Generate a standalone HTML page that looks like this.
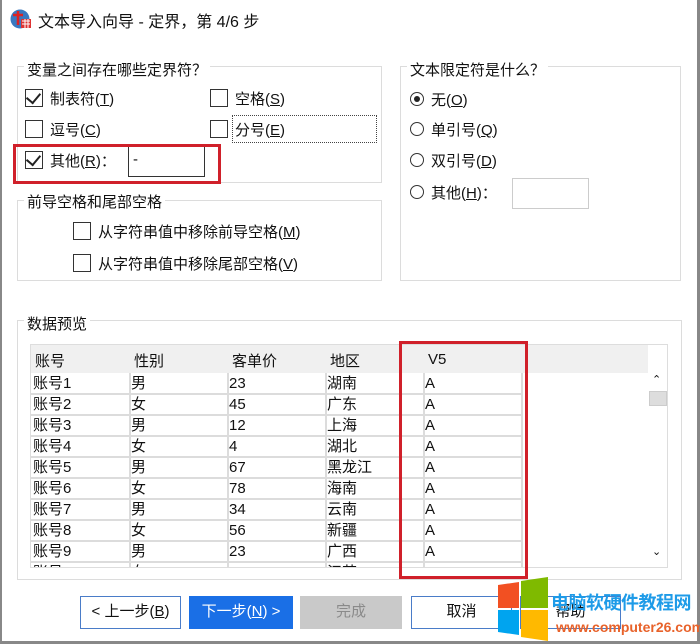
<!DOCTYPE html>
<html><head><meta charset="utf-8"><style>
*{box-sizing:border-box;margin:0;padding:0}
body{width:700px;height:644px;background:#fff;position:relative;overflow:hidden;font-family:"Liberation Sans","Microsoft YaHei","Noto Sans CJK SC",sans-serif;font-size:15px;color:#111}
.a{position:absolute;white-space:nowrap}
.g{position:absolute;border:1px solid #dcdcdc}
.lg{position:absolute;background:#fff;padding:0 3px;font-size:15px}
.cb{position:absolute;width:18px;height:18px;border:1.5px solid #333;background:#fff}
.cb.on::after{content:"";position:absolute;left:3px;top:0px;width:7px;height:11px;border:solid #222;border-width:0 2px 2px 0;transform:rotate(40deg)}
.rb{position:absolute;width:14px;height:14px;border:1.3px solid #333;border-radius:50%;background:#fff}
.rb.on::after{content:"";position:absolute;left:3px;top:3px;width:6px;height:6px;border-radius:50%;background:#222}
u{text-decoration:underline}
.btn{position:absolute;top:596px;height:33px;border:1.5px solid #4a7cc8;background:#fff;text-align:center;line-height:30px;font-size:15px}
.cell{position:absolute;height:21px;line-height:21px;font-size:15px}
.red{position:absolute;border:3px solid #d0202a}
</style></head><body>
<div class="a" style="left:0;top:0;width:2px;height:644px;background:#888"></div>
<div class="a" style="left:697px;top:0;width:3px;height:644px;background:#888"></div>
<div class="a" style="left:0;top:641px;width:700px;height:3px;background:#888"></div>
<!-- title -->
<svg class="a" style="left:10px;top:8px" width="22" height="22" viewBox="0 0 22 22"><circle cx="10" cy="11" r="9.5" fill="#3a78c0"/><rect x="11" y="11" width="10" height="9" fill="#d33"/><path d="M12 13h8M12 16h8M15 11v9M18 11v9" stroke="#fff" stroke-width="1"/><path d="M3 7h10M8 3v14" stroke="#d22" stroke-width="2.5"/></svg>
<div class="a" style="left:38px;top:8px;font-size:16px">文本导入向导 - 定界，第 4/6 步</div>

<!-- group 1 -->
<div class="g" style="left:17px;top:66px;width:365px;height:117px"></div>
<div class="lg" style="left:24px;top:59px">变量之间存在哪些定界符？</div>
<div class="cb on" style="left:25px;top:89px"></div><div class="a" style="left:50px;top:88px">制表符(<u>T</u>)</div>
<div class="cb" style="left:210px;top:89px"></div><div class="a" style="left:235px;top:88px">空格(<u>S</u>)</div>
<div class="cb" style="left:25px;top:120px"></div><div class="a" style="left:50px;top:119px">逗号(<u>C</u>)</div>
<div class="cb" style="left:210px;top:120px"></div><div class="a" style="left:235px;top:119px">分号(<u>E</u>)</div>
<div class="a" style="left:232px;top:115px;width:145px;height:28px;border:1px dotted #444"></div>
<div class="cb on" style="left:25px;top:151px"></div><div class="a" style="left:50px;top:150px">其他(<u>R</u>)：</div>
<div class="a" style="left:128px;top:146px;width:77px;height:31px;border:1.5px solid #333;padding-left:4px;line-height:26px">-</div>
<div class="red" style="left:13px;top:144px;width:208px;height:40px"></div>

<!-- group 2 -->
<div class="g" style="left:17px;top:200px;width:365px;height:81px"></div>
<div class="lg" style="left:24px;top:191px">前导空格和尾部空格</div>
<div class="cb" style="left:73px;top:222px"></div><div class="a" style="left:98px;top:221px">从字符串值中移除前导空格(<u>M</u>)</div>
<div class="cb" style="left:73px;top:254px"></div><div class="a" style="left:98px;top:253px">从字符串值中移除尾部空格(<u>V</u>)</div>

<!-- group 3 -->
<div class="g" style="left:400px;top:66px;width:281px;height:215px"></div>
<div class="lg" style="left:407px;top:59px">文本限定符是什么？</div>
<div class="rb on" style="left:410px;top:92px"></div><div class="a" style="left:431px;top:89px">无(<u>O</u>)</div>
<div class="rb" style="left:410px;top:122px"></div><div class="a" style="left:431px;top:119px">单引号(<u>Q</u>)</div>
<div class="rb" style="left:410px;top:153px"></div><div class="a" style="left:431px;top:150px">双引号(<u>D</u>)</div>
<div class="rb" style="left:410px;top:185px"></div><div class="a" style="left:431px;top:182px">其他(<u>H</u>)：</div>
<div class="a" style="left:512px;top:178px;width:77px;height:31px;border:1px solid #ccc"></div>

<!-- preview -->
<div class="g" style="left:17px;top:320px;width:665px;height:260px"></div>
<div class="lg" style="left:24px;top:313px">数据预览</div>
<div class="a" style="left:30px;top:344px;width:638px;height:224px;border:1px solid #ddd;background:#fff;overflow:hidden">
<div class="a" style="left:0;top:0;width:617px;height:28px;background:#f0f0f0"></div>
<div class="a" style="left:4px;top:5px">账号</div><div class="a" style="left:103px;top:5px">性别</div><div class="a" style="left:201px;top:5px">客单价</div><div class="a" style="left:299px;top:5px">地区</div><div class="a" style="left:397px;top:6px">V5</div>
<div id="rows"></div>
<div class="a" style="left:618px;top:28px;width:19px;height:196px;background:#fff"></div>
<div class="a" style="left:621px;top:28px;font-size:11px">&#8963;</div>
<div class="a" style="left:618px;top:46px;width:18px;height:15px;background:#ddd;border:1px solid #ccc"></div>
<div class="a" style="left:621px;top:200px;font-size:11px">&#8964;</div>
</div>
<div class="red" style="left:399px;top:341px;width:129px;height:238px"></div>

<!-- buttons -->
<div class="btn" style="left:80px;width:101px">&lt; 上一步(<u>B</u>)</div>
<div class="btn" style="left:189px;width:104px;background:#1a6fe6;border-color:#1a6fe6;color:#fff">下一步(<u>N</u>) &gt;</div>
<div class="btn" style="left:300px;width:102px;background:#c9c9c9;border-color:#c9c9c9;color:#8a8a8a">完成</div>
<div class="btn" style="left:411px;width:101px">取消</div>
<div class="btn" style="left:520px;width:101px">帮助</div>

<!-- watermark -->
<svg class="a" style="left:496px;top:575px" width="54" height="68" viewBox="0 0 54 68"><path d="M2 10 L23 7 L23 33 L2 33Z" fill="#f25022"/><path d="M25 6 L52 2 L52 33 L25 33Z" fill="#7fba00"/><path d="M2 35 L23 35 L23 60 L2 57Z" fill="#00a4ef"/><path d="M25 35 L52 35 L52 66 L25 62Z" fill="#ffb900"/></svg>
<div class="a" style="left:551px;top:589px;font-size:18px;font-weight:bold;color:#1e9be8;letter-spacing:-0.5px">电脑软硬件教程网</div>
<div class="a" style="left:556px;top:619px;font-size:14px;font-weight:bold;color:#e8622a">www.computer26.com</div>

<script>
var d=[["账号1","男","23","湖南"],["账号2","女","45","广东"],["账号3","男","12","上海"],["账号4","女","4","湖北"],["账号5","男","67","黑龙江"],["账号6","女","78","海南"],["账号7","男","34","云南"],["账号8","女","56","新疆"],["账号9","男","23","广西"],["账号10","女","56","江苏"]];
var h="",xs=[2,100,198,296,394];
d.forEach(function(r,i){var y=28+i*21;r.push("A");
r.forEach(function(c,j){h+='<div class="cell" style="left:'+xs[j]+'px;top:'+y+'px">'+c+'</div>';});
h+='<div class="a" style="left:0;top:'+(y+20)+'px;width:492px;height:2px;background:#dcdcdc"></div>';});
[98,196,294,392,490].forEach(function(x){h+='<div class="a" style="left:'+x+'px;top:28px;width:2px;height:196px;background:#dcdcdc"></div>';});
document.getElementById("rows").innerHTML=h;
</script>
</body></html>
